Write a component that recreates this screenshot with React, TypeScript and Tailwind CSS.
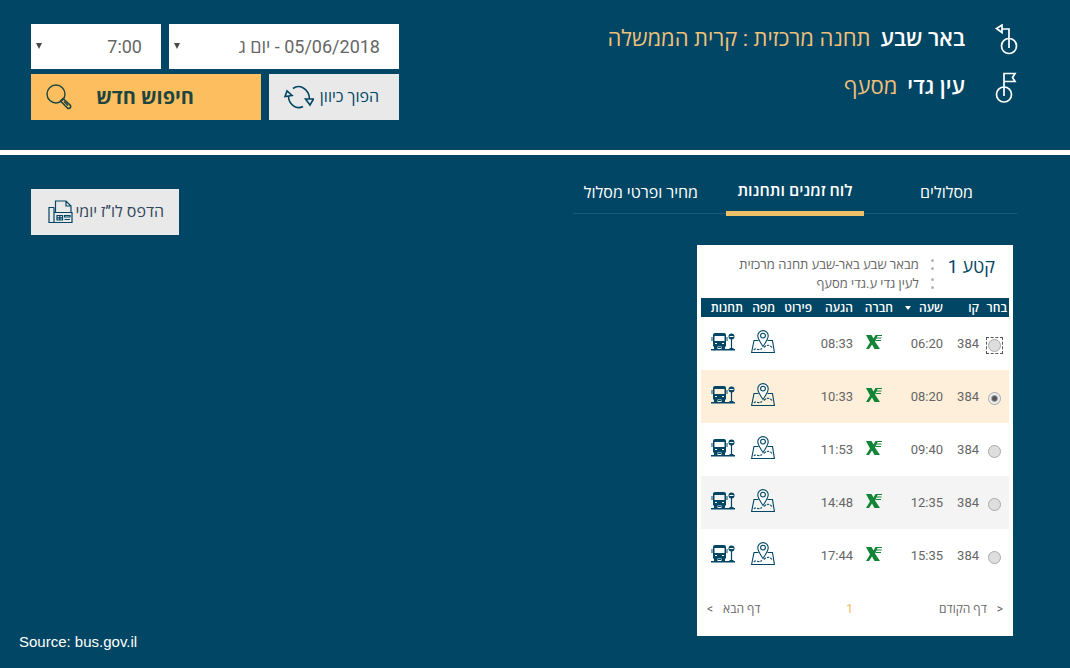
import { FC, useState } from "react";

type Trip = {
  line: string;
  departure: string;
  arrival: string;
};

const TRIPS: Trip[] = [
  { line: "384", departure: "06:20", arrival: "08:33" },
  { line: "384", departure: "08:20", arrival: "10:33" },
  { line: "384", departure: "09:40", arrival: "11:53" },
  { line: "384", departure: "12:35", arrival: "14:48" },
  { line: "384", departure: "15:35", arrival: "17:44" },
];

const StartIcon: FC = () => (
  <svg width="24" height="32" viewBox="0 0 24 32" fill="none" stroke="white" strokeWidth="1.7">
    <circle cx="14" cy="22" r="7.5" />
    <path d="M14 24V5H7V8.500L1.500 4.500L7 1V5" />
  </svg>
);

const FlagIcon: FC = () => (
  <svg width="24" height="32" viewBox="0 0 24 32" fill="none" stroke="white" strokeWidth="1.7">
    <circle cx="9" cy="22.500" r="7.5" />
    <path d="M9 24V1.500H20L17.500 5.500L20 9.500H9" />
  </svg>
);

const SearchIcon: FC = () => (
  <svg width="26" height="26" viewBox="0 0 26 26" fill="none" stroke="#1d4540" strokeWidth="1.4">
    <circle cx="10" cy="10" r="9" />
    <path d="M14.500 17L17 14.500L24.500 21.500Q25.500 24.500 22 24.500Z" strokeWidth="1.6" />
    <path d="M18 17.500L22 21.500" />
  </svg>
);

const SwapIcon: FC = () => (
  <svg width="30" height="24" viewBox="0 0 30 24" fill="none" stroke="#014664" strokeWidth="1.6">
    <path d="M9 3.500C15 -1 25 3 25.500 14" />
    <path d="M21.500 14H29.500L26 20Z" />
    <path d="M19 21.500C12 25 4.500 19 4.500 11" />
    <path d="M1 11.500L3 6L8 10.500Z" />
  </svg>
);

const PrintIcon: FC = () => (
  <svg width="25" height="24" viewBox="0 0 25 24" fill="none" stroke="#014664" strokeWidth="1.2">
    <path d="M6 7.500H1V22.500H24V12.500H6M6 7.500V22.500" />
    <path d="M7.500 12V1H18L23 6V12M18 1V6H23" />
    <path d="M9 15.500H14.500V20H9ZM9 17.800H14.500M11.800 15.500V20M16.500 15.500H22V17H16.500ZM16.500 19.500H22" />
  </svg>
);

const MapIcon: FC = () => (
  <svg width="24" height="24" viewBox="0 0 24 24" fill="none" stroke="#014664" strokeWidth="1.1">
    <path d="M7.500 10.500H3L0.600 22.500H23.400L21.500 10.500H16.500" />
    <path d="M12 16.500C10 13 6.800 9.500 6.800 5.800A5.200 5.200 0 0 1 17.200 5.800C17.200 9.500 14 13 12 16.500Z" fill="white" />
    <circle cx="12" cy="5.600" r="2.400" />
    <path d="M3 20C4 17 7 21.500 11 18.500M13 17.500C16 14 19 15 21 17.500" strokeDasharray="2.5 1" />
  </svg>
);

const BusStopIcon: FC = () => (
  <svg width="24" height="18" viewBox="0 0 24 18">
    <path
      d="M4 0H13Q15 0 15 2V13.500H2V2Q2 0 4 0ZM3.500 3V8H13.500V3ZM4 10V11H6V10ZM11 10V11H13V10Z"
      fill="#014664"
      fillRule="evenodd"
    />
    <path d="M1 4V8M16 4V8" stroke="#014664" />
    <path d="M3 13H6.500V16H3ZM10.500 13H14V16H10.500ZM7 14H10V15H7ZM0 16H24V17.500H0Z" fill="#014664" />
    <circle cx="20.500" cy="3.500" r="3" fill="#014664" />
    <path d="M18.500 3.500H22.500" stroke="white" />
    <path d="M20.500 6V16M18.500 15.500H22.500" stroke="#014664" strokeWidth="1.2" />
  </svg>
);

const CompanyLogo: FC = () => (
  <svg width="16" height="16" viewBox="0 0 16 16" role="img" aria-label="אגד">
    <path
      d="M0 1H5.500L7.500 4.500L9.500 1H12L9 7.500L14 15H8.500L6 10.500L3 15H0L4 8.500Z"
      fill="#118535"
    />
    <path d="M11 1.500H16M10 4H15.500M9.500 6.500H15" stroke="#118535" strokeWidth="1.1" />
  </svg>
);

const SelectArrow: FC = () => (
  <svg
    className="pointer-events-none absolute left-[5px] top-[19px]"
    width="6"
    height="6"
    viewBox="0 0 6 6"
    fill="#4a4a4a"
  >
    <path d="M0 0H6L3 6Z" />
  </svg>
);

type StopLineProps = {
  city: string;
  stop: string;
};

const StopLine: FC<StopLineProps> = ({ city, stop }) => (
  <p className="text-[22px] leading-[30px] text-[#f0c07a]">
    <strong className="ml-2.5 font-semibold text-white">{city}</strong>
    {stop}
  </p>
);

const SearchHeader: FC = () => (
  <header className="flex items-start justify-between border-b-[5px] border-white pb-[30px] pl-[31px] pr-[51px] pt-6">
    <div className="flex flex-col gap-4">
      <div className="flex items-start gap-[30px]">
        <StartIcon />
        <StopLine city="באר שבע" stop="תחנה מרכזית : קרית הממשלה" />
      </div>
      <div className="flex items-start gap-[30px]">
        <FlagIcon />
        <StopLine city="עין גדי" stop="מסעף" />
      </div>
    </div>

    <form className="flex w-[368px] flex-col gap-[5px]" onSubmit={(e) => e.preventDefault()}>
      <div className="flex gap-2">
        <div className="relative w-[230px]">
          <select
            aria-label="תאריך"
            className="h-[45px] w-full appearance-none bg-white pr-[19px] text-lg text-[#666]"
          >
            <option>05/06/2018 - יום ג</option>
          </select>
          <SelectArrow />
        </div>
        <div className="relative flex-1">
          <select
            aria-label="שעה"
            className="h-[45px] w-full appearance-none bg-white pr-[19px] text-lg text-[#666]"
          >
            <option>7:00</option>
          </select>
          <SelectArrow />
        </div>
      </div>
      <div className="flex gap-2">
        <button
          type="button"
          className="flex h-[46px] w-[130px] items-center gap-1.5 bg-[#e9e9e9] pr-5 text-base whitespace-nowrap text-[#014664]"
        >
          הפוך כיוון
          <SwapIcon />
        </button>
        <button
          type="submit"
          className="flex h-[46px] flex-1 items-center justify-between bg-[#fcbe5e] pl-[15px] pr-[67px] text-xl font-bold text-[#1d4540]"
        >
          חיפוש חדש
          <SearchIcon />
        </button>
      </div>
    </form>
  </header>
);

const Tabs: FC = () => (
  <nav role="tablist" className="flex w-[444px] items-end border-b border-[#1b5a78] text-base text-white">
    <button role="tab" aria-selected="false" className="h-10 w-[153px] pr-11 text-right">
      מסלולים
    </button>
    <button
      role="tab"
      aria-selected="true"
      className="-mb-[3px] h-[42px] w-[138px] border-b-[5px] border-[#ecc168] pb-1 text-center font-semibold whitespace-nowrap"
    >
      לוח זמנים ותחנות
    </button>
    <button role="tab" aria-selected="false" className="h-10 w-[153px] pr-7 text-right whitespace-nowrap">
      מחיר ופרטי מסלול
    </button>
  </nav>
);

const rowColor = (index: number, selected: number) => {
  if (index === selected) return "bg-[#feefda]";
  return index % 2 === 1 ? "bg-[#f4f4f4]" : "bg-white";
};

const Timetable: FC = () => {
  const [selected, setSelected] = useState(1);
  const [focused, setFocused] = useState(0);

  return (
    <table className="w-full table-fixed border-collapse text-right text-[13px] text-[#666]">
      <thead className="bg-[#014664] text-xs text-white">
        <tr className="h-[19px] whitespace-nowrap">
          <th scope="col" className="w-[30px] pr-0.5 font-semibold">בחר</th>
          <th scope="col" className="w-9 font-semibold">קו</th>
          <th scope="col" className="w-[50px] font-semibold">
            שעה
            <svg className="mr-2 inline" width="6" height="4" viewBox="0 0 6 4" fill="white">
              <path d="M0 0H6L3 4Z" />
            </svg>
          </th>
          <th scope="col" className="w-10 font-semibold">חברה</th>
          <th scope="col" className="w-[41px] font-semibold">הגעה</th>
          <th scope="col" className="w-[37px] font-semibold">פירוט</th>
          <th scope="col" className="w-8 font-semibold">מפה</th>
          <th scope="col" className="font-semibold">תחנות</th>
        </tr>
      </thead>
      <tbody>
        {TRIPS.map((trip, index) => (
          <tr key={trip.departure} className={`h-[53px] ${rowColor(index, selected)}`}>
            <td className="pr-[7px] pt-1">
              <span
                className={`block w-[15px] p-px ${
                  index === focused ? "outline-1 outline-dashed outline-[#555]" : ""
                }`}
              >
                <input
                  type="radio"
                  name="trip"
                  aria-label={trip.departure}
                  checked={index === selected}
                  onFocus={() => setFocused(index)}
                  onChange={() => setSelected(index)}
                  className="block size-[13px] appearance-none rounded-full border border-[#a9a9a9] bg-[#dedede] outline-none checked:bg-[radial-gradient(circle,#555_2px,#eee_4px)]"
                />
              </span>
            </td>
            <td>{trip.line}</td>
            <td>{trip.departure}</td>
            <td className="pb-1 pr-[11px]">
              <CompanyLogo />
            </td>
            <td>{trip.arrival}</td>
            <td></td>
            <td className="pb-1">
              <button type="button" aria-label="מפה" className="block">
                <MapIcon />
              </button>
            </td>
            <td className="pb-1 pr-2">
              <button type="button" aria-label="תחנות" className="block">
                <BusStopIcon />
              </button>
            </td>
          </tr>
        ))}
      </tbody>
    </table>
  );
};

const Dots: FC = () => (
  <svg width="3" height="30" viewBox="0 0 3 30" fill="#b5b5b5">
    <circle cx="1.500" cy="1.500" r="1.500" />
    <circle cx="1.500" cy="9.500" r="1.500" />
    <circle cx="1.500" cy="20.500" r="1.500" />
    <circle cx="1.500" cy="28.500" r="1.500" />
  </svg>
);

const SegmentCard: FC = () => (
  <section className="mr-1 mt-[31px] w-[316px] bg-white px-1 pb-[18px] text-[#666]">
    <div className="flex h-[53px] items-start pr-3.5 pt-2">
      <h2 className="ml-3.5 text-lg leading-7 text-[#014664]">קטע 1</h2>
      <div className="ml-3 mt-1.5">
        <Dots />
      </div>
      <p className="mt-0.5 text-[13px] leading-[19px] whitespace-nowrap">
        מבאר שבע באר-שבע תחנה מרכזית
        <br />
        לעין גדי ע.גדי מסעף
      </p>
    </div>
    <Timetable />
    <div className="mt-[18px] flex items-center justify-between px-1.5 text-xs leading-[18px]">
      <button type="button" className="flex gap-2.5">
        <span>&lt;</span>
        דף הקודם
      </button>
      <span className="text-[#f0b860]">1</span>
      <button type="button" className="flex gap-2.5">
        דף הבא
        <span>&gt;</span>
      </button>
    </div>
  </section>
);

const App: FC = () => (
  <div
    dir="rtl"
    className="flex min-h-screen flex-col bg-[#014664] font-[Roboto,'Open_Sans','DejaVu_Sans',sans-serif]"
  >
    <SearchHeader />
    <main className="flex items-start justify-between pl-[31px] pr-[53px] pt-[18px]">
      <div>
        <Tabs />
        <SegmentCard />
      </div>
      <button
        type="button"
        className="mt-4 flex h-[46px] w-[148px] items-center gap-0.5 bg-[#e9e9e9] pr-[15px] text-base text-[#33475a] whitespace-nowrap"
      >
        הדפס לו”ז יומי
        <PrintIcon />
      </button>
    </main>
    <footer
      dir="ltr"
      className="-mt-1 pl-[19px] font-['Liberation_Sans',Arial,sans-serif] text-[15px] leading-5 text-white"
    >
      Source: bus.gov.il
    </footer>
  </div>
);

export default App;
